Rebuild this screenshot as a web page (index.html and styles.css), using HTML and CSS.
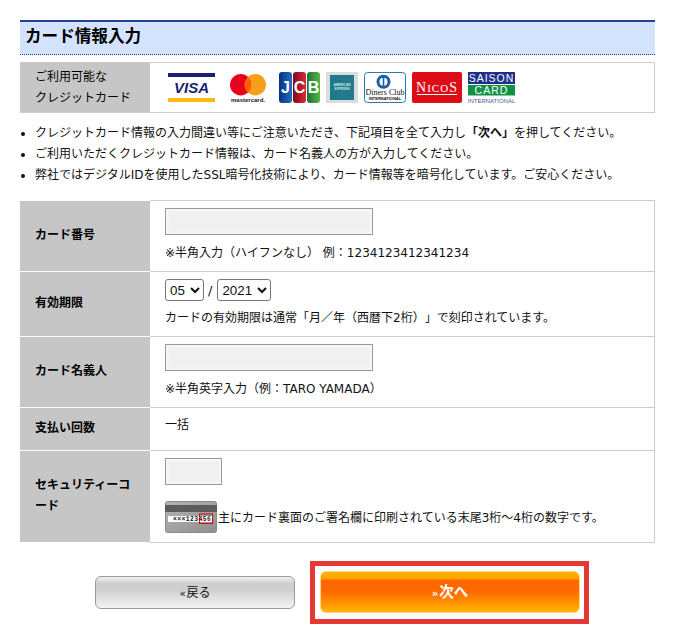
FILE: index.html
```html
<!DOCTYPE html>
<html lang="ja">
<head>
    <meta charset="UTF-8">
    <meta name="viewport" content="width=device-width, initial-scale=1.0">
    <title>カード情報入力</title>
    <link rel="stylesheet" href="styles.css">
</head>
<body>
    <div class="container">
        <h2 class="title">カード情報入力</h2>

        <div class="brands">
            <div class="brands-label">ご利用可能な<br>クレジットカード</div>
            <div class="brands-logos">
                <svg class="logo logo-visa" width="47" height="31" viewBox="0 0 47 31">
                    <rect y="1" width="47" height="4" fill="#1a1f71"/>
                    <rect y="26" width="47" height="4" fill="#fdb913"/>
                    <text x="23.5" y="21" class="t-visa" text-anchor="middle">VISA</text>
                </svg>
                <svg class="logo logo-mc" width="36" height="31" viewBox="0 0 36 31">
                    <circle cx="10.7" cy="12.7" r="10.7" fill="#eb001b"/>
                    <circle cx="25.3" cy="12.7" r="10.7" fill="#f79e1b"/>
                    <path d="M18 4.9a10.7 10.7 0 0 1 0 15.6a10.7 10.7 0 0 1 0-15.6z" fill="#ff5f00"/>
                    <text x="18" y="29.5" class="t-mc" text-anchor="middle">mastercard.</text>
                </svg>
                <svg class="logo logo-jcb" width="41" height="31" viewBox="0 0 41 31">
                    <defs>
                        <linearGradient id="jcbBlue"><stop offset="0" stop-color="#0a2f86"/><stop offset="1" stop-color="#1f6fc0"/></linearGradient>
                        <linearGradient id="jcbRed"><stop offset="0" stop-color="#7c0c1c"/><stop offset="1" stop-color="#e0263a"/></linearGradient>
                        <linearGradient id="jcbGreen"><stop offset="0" stop-color="#17762f"/><stop offset="1" stop-color="#58b548"/></linearGradient>
                    </defs>
                    <rect width="13" height="31" rx="3" fill="url(#jcbBlue)"/>
                    <rect x="14" width="13" height="31" rx="3" fill="url(#jcbRed)"/>
                    <rect x="28" width="13" height="31" rx="3" fill="url(#jcbGreen)"/>
                    <text x="6.5" y="21" class="t-jcb" text-anchor="middle">J</text>
                    <text x="20.5" y="21" class="t-jcb" text-anchor="middle">C</text>
                    <text x="34.5" y="21" class="t-jcb" text-anchor="middle">B</text>
                </svg>
                <svg class="logo" width="32" height="31" viewBox="0 0 32 31">
                    <rect width="32" height="31" fill="#dcdcdc"/>
                    <rect x="4" y="3" width="24" height="25" fill="#1f7a8c"/>
                    <text x="16" y="14" class="t-amex" text-anchor="middle">AMERICAN</text>
                    <text x="16" y="18" class="t-amex" text-anchor="middle">EXPRESS</text>
                </svg>
                <svg class="logo" width="42" height="31" viewBox="0 0 42 31">
                    <rect x=".5" y=".5" width="41" height="30" rx="3" fill="#fff" stroke="#2a7ab8"/>
                    <circle cx="19.5" cy="9.7" r="7" fill="#1b5fa8"/>
                    <circle cx="19.5" cy="9.7" r="4" fill="#fff"/>
                    <rect x="18.7" y="5" width="1.6" height="9.4" fill="#1b5fa8"/>
                    <text x="21" y="23" class="t-diners" text-anchor="middle">Diners Club</text>
                    <text x="21" y="28" class="t-diners-sub" text-anchor="middle">INTERNATIONAL</text>
                </svg>
                <svg class="logo" width="50" height="31" viewBox="0 0 50 31">
                    <rect width="50" height="31" rx="2" fill="#dc0d17"/>
                    <text x="25" y="19.5" class="t-nicos" text-anchor="middle">N<tspan class="t-nicos-small">ICO</tspan>S</text>
                    <rect x="5" y="22" width="40" height="1" fill="#fff"/>
                </svg>
                <svg class="logo" width="47" height="31" viewBox="0 0 47 31">
                    <rect width="47" height="12" fill="#1c2f8c"/>
                    <rect y="13" width="47" height="10.5" fill="#0e9345"/>
                    <text x="23.5" y="10" class="t-saison" text-anchor="middle">SAISON</text>
                    <text x="23.5" y="22" class="t-saison" text-anchor="middle">CARD</text>
                    <text x="23.5" y="30.5" class="t-saison-sub" text-anchor="middle">INTERNATIONAL</text>
                </svg>
            </div>
        </div>

        <ul class="notes">
            <li>クレジットカード情報の入力間違い等にご注意いただき、下記項目を全て入力し<b>「次へ」</b>を押してください。</li>
            <li>ご利用いただくクレジットカード情報は、カード名義人の方が入力してください。</li>
            <li>弊社ではデジタルIDを使用したSSL暗号化技術により、カード情報等を暗号化しています。ご安心ください。</li>
        </ul>

        <table class="form-table">
            <tr class="row-number">
                <th>カード番号</th>
                <td>
                    <input type="text" class="field field-long">
                    <p class="hint">※半角入力（ハイフンなし） 例：1234123412341234</p>
                </td>
            </tr>
            <tr class="row-expiry">
                <th>有効期限</th>
                <td>
                    <div class="expiry">
                        <select class="picker picker-month"><option>05</option></select>
                        <span class="slash">/</span>
                        <select class="picker picker-year"><option>2021</option></select>
                    </div>
                    <p class="hint">カードの有効期限は通常「月／年（西暦下2桁）」で刻印されています。</p>
                </td>
            </tr>
            <tr class="row-name">
                <th>カード名義人</th>
                <td>
                    <input type="text" class="field field-long">
                    <p class="hint">※半角英字入力（例：TARO YAMADA）</p>
                </td>
            </tr>
            <tr class="row-pay">
                <th>支払い回数</th>
                <td class="cell-top">一括</td>
            </tr>
            <tr class="row-code">
                <th>セキュリティーコード</th>
                <td>
                    <input type="text" class="field field-short">
                    <div class="code-note">
                        <svg width="52" height="32" viewBox="0 0 52 32">
                            <defs>
                                <linearGradient id="cardBack" x2="1" y2="1"><stop offset="0" stop-color="#b5b5b5"/><stop offset="1" stop-color="#8f8f8f"/></linearGradient>
                            </defs>
                            <rect x=".5" y=".5" width="51" height="31" rx="2" fill="url(#cardBack)" stroke="#8a8a8a"/>
                            <rect y="4" width="52" height="7" fill="#5c5c5c"/>
                            <rect x="3" y="15" width="44" height="6" fill="#fff"/>
                            <text x="8" y="20.3" class="t-card">×××123456</text>
                            <rect x="34.5" y="13" width="13" height="9.5" fill="none" stroke="#e00000"/>
                        </svg>
                        <span class="code-text">主にカード裏面のご署名欄に印刷されている末尾3桁～4桁の数字です。</span>
                    </div>
                </td>
            </tr>
        </table>

        <div class="actions">
            <button class="btn btn-back"><span class="arrow">«</span>戻る</button>
            <div class="next-frame">
                <button class="btn btn-next"><span class="arrow">»</span>次へ</button>
            </div>
        </div>
    </div>
</body>
</html>
```

FILE: styles.css
```css
* {
    margin: 0;
    padding: 0;
    box-sizing: border-box;
}

body {
    font-family: "DejaVu Sans", "Noto Sans CJK JP", sans-serif;
    font-size: 12px;
    color: #111;
    background: #fff;
    text-spacing-trim: space-all;
}

.container {
    width: 635px;
    margin: 20px 0 0 20px;
}

.title {
    height: 35px;
    border-top: 2px solid #26409a;
    border-bottom: 1px dotted #26409a;
    background: #d3e2fd;
    font-size: 16.6px;
    font-weight: 700;
    line-height: 30px;
    padding-left: 5px;
    color: #000;
}

.brands {
    display: flex;
    height: 51px;
    margin-top: 7px;
    border: 1px solid #ccc;
    border-left: none;
}

.brands-label {
    width: 130px;
    background: #c6c6c6;
    padding: 4px 0 0 15px;
    line-height: 21px;
    color: #000;
}

.brands-logos {
    display: flex;
    align-items: center;
    padding-left: 18px;
}

.logo {
    display: block;
    margin-right: 6px;
}

.logo-visa { margin-right: 15px; }
.logo-mc { margin-right: 13px; }

.t-visa { font: italic 700 15px "Liberation Sans", sans-serif; fill: #1a1f71; }
.t-mc { font: 700 6px "Liberation Sans", sans-serif; fill: #222; }
.t-jcb { font: 700 16px "Liberation Sans", sans-serif; fill: #fff; }
.t-amex { font: 700 3.2px "Liberation Sans", sans-serif; fill: #d5e8ec; }
.t-diners { font: 8px "Liberation Serif", serif; fill: #111; }
.t-diners-sub { font: 700 4px "Liberation Sans", sans-serif; fill: #111; }
.t-nicos { font: 14px "Liberation Serif", serif; fill: #fff; letter-spacing: 1px; }
.t-nicos-small { font-size: 11px; }
.t-saison { font: 10.5px "Liberation Sans", sans-serif; fill: #fff; letter-spacing: 1px; }
.t-saison-sub { font: 6px "Liberation Sans", sans-serif; fill: #4a5a9c; }
.t-card { font: 700 6.4px "Liberation Mono", monospace; fill: #222; letter-spacing: .4px; }

.notes {
    list-style: none;
    margin-top: 10px;
}

.notes li {
    position: relative;
    padding-left: 15px;
    line-height: 21px;
}

.notes li::before {
    content: "";
    position: absolute;
    left: 1px;
    top: 9px;
    width: 4px;
    height: 4px;
    border-radius: 50%;
    background: #111;
}

.form-table {
    width: 635px;
    margin-top: 14px;
    border-collapse: collapse;
    table-layout: fixed;
}

.form-table th {
    width: 130px;
    background: #c6c6c6;
    border-top: 1px solid #fff;
    border-bottom: 1px solid #fff;
    padding: 0 15px 2px;
    text-align: left;
    font-weight: 700;
    line-height: 21px;
    color: #000;
}

.form-table td {
    border: 1px solid #ccc;
    border-left: none;
    padding: 7px 15px 0;
    vertical-align: top;
}

.row-number td { height: 71px; }
.row-expiry td { height: 65px; }
.row-name td { height: 71px; }
.row-pay td { height: 43px; }
.row-code td { height: 92px; }

.field {
    display: block;
    height: 27px;
    border: 1px solid #999;
    background: #f0f0f0;
    box-shadow: inset 0 0 4px #fff;
}

.field-long { width: 208px; }
.field-short { width: 57px; }

.hint {
    margin-top: 9px;
    line-height: 18px;
}

.expiry {
    display: flex;
    align-items: center;
    height: 22px;
}

.row-expiry .hint {
    margin-top: 8px;
}

.picker {
    height: 22px;
    font: 13.33px "Liberation Sans", sans-serif;
    color: #111;
    border: 1px solid #767676;
    border-radius: 3px;
    background: #fff;
}

.picker-month { width: 39px; }
.picker-year { width: 54px; }

.slash {
    margin: 0 5px 0 4px;
    font-size: 13px;
}

.cell-top {
    line-height: 21px;
}

.code-note {
    display: flex;
    align-items: center;
    margin-top: 16px;
}

.code-note svg {
    display: block;
    flex: none;
}

.code-text {
    margin: 0 0 2px 1px;
}

.actions {
    display: flex;
    align-items: center;
    margin-top: 18px;
    padding-left: 75px;
}

.btn {
    font-family: inherit;
    font-size: 12px;
    cursor: pointer;
}

.arrow {
    font-size: 10px;
    margin-right: 1px;
}

.btn-back {
    width: 200px;
    height: 33px;
    padding-bottom: 2px;
    border: 1px solid #999;
    border-radius: 6px;
    color: #111;
    background: linear-gradient(#f2f2f2, #cfcfcf 20%, #cfcfcf 40%, #f4f4f4);
}

.next-frame {
    width: 279px;
    margin-left: 15px;
    border: 5px solid #e53935;
    padding: 5px 4px 6px 5px;
}

.btn-next {
    display: block;
    width: 260px;
    height: 42px;
    padding-bottom: 3px;
    border: 1px solid #ffd680;
    border-radius: 6px;
    color: #fff;
    font-size: 14.5px;
    font-weight: 700;
    background: linear-gradient(#ffb400 0, #ffa000 18%, #ff6600 20%, #ff6a00 50%, #ffb400 100%);
}
```
